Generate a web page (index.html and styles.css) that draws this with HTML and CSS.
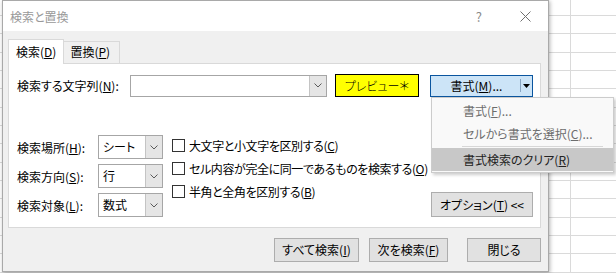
FILE: index.html
```html
<!DOCTYPE html>
<html lang="ja">
    <head>
        <title>検索と置換</title>
        <meta charset="utf-8">
        <link rel="stylesheet" href="styles.css">
    </head>
    <body>
        <div class="dialog">
            <div class="titlebar">
                <span class="title">検索と置換</span>
                <span class="help">?</span>
                <svg class="close" width="11" height="11" viewBox="0 0 11 11">
                    <path d="M0.5 0.5 L10.5 10.5 M10.5 0.5 L0.5 10.5" stroke="#707070" stroke-width="1" fill="none"/>
                </svg>
            </div>

            <div class="client">
                <div class="tabs">
                    <div class="tab active">検索(<u>D</u>)</div>
                    <div class="tab">置換(<u>P</u>)</div>
                </div>

                <div class="panel">
                    <div class="find-row">
                        <span class="find-label">検索する文字列(<u>N</u>):</span>
                        <div class="combo find-combo">
                            <span class="combo-text"></span>
                            <span class="combo-btn">
                                <svg width="8" height="5" viewBox="0 0 8 5"><path d="M0.5 0.5 L4 4 L7.5 0.5" stroke="#5a5a5a" fill="none"/></svg>
                            </span>
                        </div>
                        <div class="preview">プレビュー＊</div>
                        <div class="split">
                            <span class="split-main">書式(<u>M</u>)...</span>
                            <span class="split-arrow">
                                <svg width="7" height="4" viewBox="0 0 7 4"><path d="M0 0 L7 0 L3.5 4 Z" fill="#000"/></svg>
                            </span>
                            <div class="menu">
                                <div class="menu-item disabled">書式(<u>F</u>)...</div>
                                <div class="menu-item disabled">セルから書式を選択(<u>C</u>)...</div>
                                <div class="menu-sep"></div>
                                <div class="menu-item hot">書式検索のクリア(<u>R</u>)</div>
                            </div>
                        </div>
                    </div>

                    <div class="options">
                        <div class="selects">
                            <div class="select-row">
                                <span class="select-label">検索場所(<u>H</u>):</span>
                                <div class="combo small-combo">
                                    <span class="combo-text">シート</span>
                                    <span class="combo-btn">
                                        <svg width="8" height="5" viewBox="0 0 8 5"><path d="M0.5 0.5 L4 4 L7.5 0.5" stroke="#5a5a5a" fill="none"/></svg>
                                    </span>
                                </div>
                            </div>
                            <div class="select-row">
                                <span class="select-label">検索方向(<u>S</u>):</span>
                                <div class="combo small-combo">
                                    <span class="combo-text">行</span>
                                    <span class="combo-btn">
                                        <svg width="8" height="5" viewBox="0 0 8 5"><path d="M0.5 0.5 L4 4 L7.5 0.5" stroke="#5a5a5a" fill="none"/></svg>
                                    </span>
                                </div>
                            </div>
                            <div class="select-row">
                                <span class="select-label">検索対象(<u>L</u>):</span>
                                <div class="combo small-combo">
                                    <span class="combo-text">数式</span>
                                    <span class="combo-btn">
                                        <svg width="8" height="5" viewBox="0 0 8 5"><path d="M0.5 0.5 L4 4 L7.5 0.5" stroke="#5a5a5a" fill="none"/></svg>
                                    </span>
                                </div>
                            </div>
                        </div>

                        <div class="checks">
                            <div class="check-row"><span class="box"></span><span class="check-text">大文字と小文字を区別する(<u>C</u>)</span></div>
                            <div class="check-row"><span class="box"></span><span class="check-text">セル内容が完全に同一であるものを検索する(<u>O</u>)</span></div>
                            <div class="check-row"><span class="box"></span><span class="check-text">半角と全角を区別する(<u>B</u>)</span></div>
                        </div>

                        <div class="btn option-btn">オプション(<u>T</u>) &lt;&lt;</div>
                    </div>
                </div>

                <div class="actions">
                    <div class="btn find-all">すべて検索(<u>I</u>)</div>
                    <div class="btn find-next">次を検索(<u>F</u>)</div>
                    <div class="btn close-btn">閉じる</div>
                </div>
            </div>
        </div>
    </body>
</html>
```

FILE: styles.css
```css
:root {
    --grid: #dadada;
    --face: #f0f0f0;
    --btn: #e1e1e1;
    --btn-border: #adadad;
}
body {
    margin: 0;
    width: 616px;
    height: 273px;
    overflow: hidden;
    font-family: "Noto Sans CJK JP", sans-serif;
    font-size: 12px;
    font-feature-settings: "palt";
    color: #000;
    background-color: #fff;
    background-image:
        linear-gradient(to right, transparent 570px, var(--grid) 570px, var(--grid) 571px, transparent 571px),
        linear-gradient(to bottom, var(--grid) 0 1px, transparent 1px 18px, var(--grid) 18px 19px, transparent 19px 37px, var(--grid) 37px 38px, transparent 38px);
    background-size: auto, 100% 55px;
    background-position: 0 0, 0 15px;
}
u {
    text-decoration-thickness: 1px;
    text-underline-offset: 1px;
}
.dialog {
    margin-left: 2px;
    width: 545px;
    height: 270px;
    border: 1px solid #a9a9a9;
    background: var(--face);
    box-shadow: 1px 1px 4px rgba(0, 0, 0, 0.3);
    display: flex;
    flex-direction: column;
}
.titlebar {
    height: 30px;
    background: #fff;
    display: flex;
    align-items: center;
    color: #999;
}
.title {
    margin-left: 7px;
    flex: 1;
}
.help {
    color: #8a8a8a;
    font-size: 13px;
    margin-right: 38px;
}
.close {
    margin-right: 17px;
}
.client {
    flex: 1;
    padding: 8px 7px 0 5px;
}
.tabs {
    display: flex;
    align-items: flex-end;
    height: 24px;
}
.tab {
    height: 21px;
    line-height: 20px;
    padding: 0 6px;
    border: 1px solid #d9d9d9;
    border-bottom: none;
    background: var(--face);
}
.tab.active {
    height: 24px;
    line-height: 23px;
    padding: 0 7px;
    background: #fff;
    position: relative;
    z-index: 1;
    margin-bottom: -1px;
    border-right: 1px solid #d9d9d9;
}
.tab + .tab {
    border-left: none;
    width: 43px;
}
.panel {
    height: 163px;
    background: #fff;
    border: 1px solid #d9d9d9;
    padding: 0 7px 0 8px;
}
.find-row {
    display: flex;
    align-items: center;
    margin-top: 10px;
    height: 23px;
}
.find-label {
    width: 113px;
}
.combo {
    display: flex;
    background: #fff;
    border: 1px solid #a6a6a6;
    box-sizing: border-box;
}
.combo-text {
    flex: 1;
    padding-left: 4px;
    line-height: 20px;
}
.combo-btn {
    width: 16px;
    background: #e5e5e5;
    border-left: 1px solid #c4c4c4;
    display: flex;
    align-items: center;
    justify-content: center;
}
.find-combo {
    width: 197px;
    height: 22px;
}
.preview {
    margin-left: 8px;
    width: 84px;
    height: 23px;
    box-sizing: border-box;
    border: 1px solid #000;
    background: #ffff00;
    text-align: center;
    line-height: 21px;
    font-weight: 300;
}
.split {
    position: relative;
    margin-left: 11px;
    width: 103px;
    height: 22px;
    box-sizing: border-box;
    border: 1px solid #0a559f;
    background: #cce4f7;
    display: flex;
    align-items: center;
}
.split-main {
    flex: 1;
    text-align: center;
    padding-left: 2px;
}
.split-arrow {
    width: 10px;
    height: 13px;
    border-left: 1px solid #8aa6c2;
    display: flex;
    align-items: center;
    justify-content: center;
    margin-right: 1px;
}
.menu {
    position: absolute;
    left: 0;
    top: 21px;
    width: 181px;
    padding: 1px 0;
    background: #f9f9f9;
    border: 1px solid #cccccc;
    box-shadow: 2px 2px 3px rgba(0, 0, 0, 0.2);
    z-index: 2;
}
.menu-item {
    height: 23px;
    line-height: 23px;
    padding-left: 31px;
    white-space: nowrap;
}
.menu-item.disabled {
    color: #6d6d6d;
}
.menu-item.hot {
    background: #c8c8c8;
    color: #222;
}
.menu-sep {
    height: 1px;
    margin: 1px 10px 1px 30px;
    background: #d7d7d7;
}
.options {
    display: flex;
    margin-top: 38px;
}
.selects {
    display: flex;
    flex-direction: column;
    gap: 5px;
    flex-shrink: 0;
}
.select-row {
    display: flex;
    align-items: center;
}
.select-label {
    width: 81px;
}
.small-combo {
    width: 65px;
    height: 24px;
}
.small-combo .combo-text {
    line-height: 22px;
}
.checks {
    margin-left: 9px;
    margin-top: -1px;
    flex-shrink: 0;
}
.check-row {
    display: flex;
    align-items: center;
    height: 23px;
}
.check-text {
    white-space: nowrap;
    letter-spacing: -0.4px;
}
.box {
    width: 11px;
    height: 11px;
    border: 1px solid #333;
    background: #fff;
    margin-right: 4px;
    flex-shrink: 0;
}
.btn {
    box-sizing: border-box;
    height: 24px;
    line-height: 22px;
    border: 1px solid var(--btn-border);
    background: var(--btn);
    text-align: center;
}
.option-btn {
    align-self: flex-end;
    margin-left: auto;
    flex-shrink: 0;
    width: 102px;
    height: 25px;
    line-height: 23px;
}
.actions {
    display: flex;
    justify-content: flex-end;
    margin-top: 10px;
}
.find-all {
    width: 85px;
}
.find-next {
    width: 79px;
    margin-left: 10px;
}
.close-btn {
    width: 74px;
    margin-left: 19px;
}
```
